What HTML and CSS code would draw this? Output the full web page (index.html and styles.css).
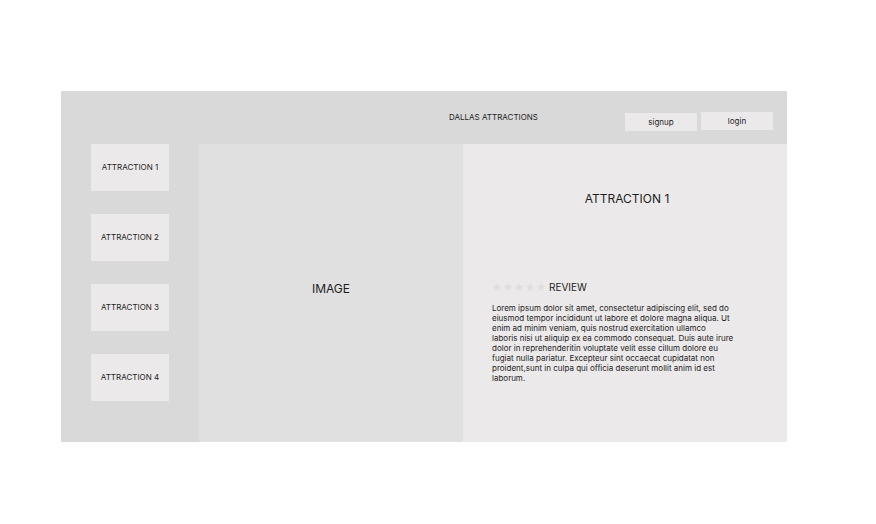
FILE: index.html
```html
<!DOCTYPE html>
<html>
<head>
<meta charset="utf-8">
<link rel="stylesheet" href="styles.css">
</head>
<body>
<div class="frame">
  <header class="header">
    <div class="site-title">DALLAS ATTRACTIONS</div>
    <div class="auth">
      <button class="btn btn-signup">signup</button>
      <button class="btn btn-login">login</button>
    </div>
  </header>
  <main class="content">
    <nav class="sidebar">
      <div class="card">ATTRACTION 1</div>
      <div class="card">ATTRACTION 2</div>
      <div class="card">ATTRACTION 3</div>
      <div class="card">ATTRACTION 4</div>
    </nav>
    <section class="image-panel">IMAGE</section>
    <section class="detail">
      <h1 class="detail-title">ATTRACTION 1</h1>
      <div class="review-row">
        <div class="stars">
          <svg viewBox="0 0 24 24"><polygon points="12,2 14.9,8.6 22,9.3 16.6,14 18.2,21 12,17.3 5.8,21 7.4,14 2,9.3 9.1,8.6"/></svg>
          <svg viewBox="0 0 24 24"><polygon points="12,2 14.9,8.6 22,9.3 16.6,14 18.2,21 12,17.3 5.8,21 7.4,14 2,9.3 9.1,8.6"/></svg>
          <svg viewBox="0 0 24 24"><polygon points="12,2 14.9,8.6 22,9.3 16.6,14 18.2,21 12,17.3 5.8,21 7.4,14 2,9.3 9.1,8.6"/></svg>
          <svg viewBox="0 0 24 24"><polygon points="12,2 14.9,8.6 22,9.3 16.6,14 18.2,21 12,17.3 5.8,21 7.4,14 2,9.3 9.1,8.6"/></svg>
          <svg viewBox="0 0 24 24"><polygon points="12,2 14.9,8.6 22,9.3 16.6,14 18.2,21 12,17.3 5.8,21 7.4,14 2,9.3 9.1,8.6"/></svg>
        </div>
        <span class="review-label">REVIEW</span>
      </div>
      <p class="review-text">Lorem ipsum dolor sit amet, consectetur adipiscing elit, sed do<br>eiusmod tempor incididunt ut labore et dolore magna aliqua. Ut<br>enim ad minim veniam, quis nostrud exercitation ullamco<br>laboris nisi ut aliquip ex ea commodo consequat. Duis aute irure<br>dolor in reprehenderitin voluptate velit esse cillum dolore eu<br>fugiat nulla pariatur. Excepteur sint occaecat cupidatat non<br>proident,sunt in culpa qui officia deserunt mollit anim id est<br>laborum.</p>
    </section>
  </main>
</div>
</body>
</html>
```

FILE: styles.css
```css
* { box-sizing: border-box; }
html, body { margin: 0; padding: 0; background: #ffffff; }
body {
  font-family: Inter, "Liberation Sans", sans-serif;
  color: #1e1e1e;
  padding: 91px 0 0 61px;
}
.frame {
  width: 726px;
  height: 351px;
  background: #d9d9d9;
  display: flex;
  flex-direction: column;
}
.header {
  height: 53px;
  display: flex;
  align-items: flex-start;
  padding-right: 14px;
}
.site-title {
  margin-left: 388px;
  margin-top: 21px;
  font-size: 8px;
  line-height: 10px;
}
.auth {
  margin-left: auto;
  margin-top: 21px;
  display: flex;
  align-items: flex-start;
  gap: 4px;
}
.btn {
  width: 72px;
  height: 18px;
  border: none;
  background: #ebe9ea;
  font-family: inherit;
  font-size: 8px;
  color: #1e1e1e;
  padding: 0;
}
.btn-signup { margin-top: 1px; }
.content {
  flex: 1;
  display: flex;
}
.sidebar {
  width: 138px;
  padding-left: 30px;
  display: flex;
  flex-direction: column;
  gap: 23px;
}
.card {
  width: 78px;
  height: 47px;
  background: #ebe9ea;
  display: flex;
  align-items: center;
  justify-content: center;
  font-size: 8px;
  padding-bottom: 1px;
}
.image-panel {
  width: 264px;
  background: #e0e0e0;
  display: flex;
  align-items: center;
  justify-content: center;
  font-size: 12px;
  padding-bottom: 10px;
}
.detail {
  flex: 1;
  background: #ebe9ea;
  padding: 48px 0 0 29px;
}
.detail-title {
  margin: 0 0 0 -25px;
  text-align: center;
  font-weight: 400;
  font-size: 12px;
  line-height: 14px;
}
.review-row {
  margin-top: 75px;
  display: flex;
  align-items: center;
  gap: 3px;
}
.stars { display: flex; gap: 1px; }
.stars svg { width: 10px; height: 10px; fill: #dededf; }
.review-label { font-size: 10px; line-height: 12px; }
.review-text {
  margin: 10px 0 0 0;
  width: 270px;
  font-size: 8px;
  line-height: 10px;
}
```
